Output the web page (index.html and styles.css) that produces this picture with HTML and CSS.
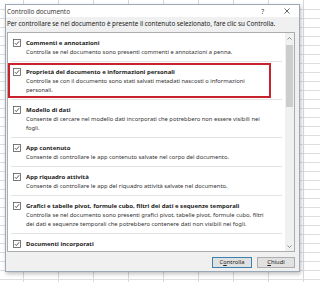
FILE: index.html
```html
<!DOCTYPE html>
<html lang="it">
<head>
<meta charset="utf-8">
<title>Controllo documento</title>
<link rel="stylesheet" href="styles.css">
</head>
<body>
<div class="dialog">
  <div class="titlebar">
    <span class="title">Controllo documento</span>
    <span class="help">?</span>
    <svg class="close" width="6" height="6" viewBox="0 0 6 6"><path d="M0.5 0.5 L5.5 5.5 M5.5 0.5 L0.5 5.5" stroke="#444" stroke-width="0.8" fill="none"/></svg>
  </div>
  <div class="content">
    <p class="intro">Per controllare se nel documento è presente il contenuto selezionato, fare clic su Controlla.</p>
    <div class="listbox">
      <div class="items">
        <div class="item">
          <div class="item-head"><svg class="check" width="8" height="8" viewBox="0 0 8 8"><rect x="0.5" y="0.5" width="7" height="7" fill="#fff" stroke="#5a5a5a" stroke-width="0.8"/><path d="M1.8 4.1 L3.3 5.6 L6.2 2.2" stroke="#333" stroke-width="0.8" fill="none"/></svg><span class="item-title">Commenti e annotazioni</span></div>
          <p class="item-desc">Controlla se nel documento sono presenti commenti e annotazioni a penna.</p>
        </div>
        <div class="item highlighted">
          <div class="item-head"><svg class="check" width="8" height="8" viewBox="0 0 8 8"><rect x="0.5" y="0.5" width="7" height="7" fill="#fff" stroke="#5a5a5a" stroke-width="0.8"/><path d="M1.8 4.1 L3.3 5.6 L6.2 2.2" stroke="#333" stroke-width="0.8" fill="none"/></svg><span class="item-title">Proprietà del documento e informazioni personali</span></div>
          <p class="item-desc">Controlla se con il documento sono stati salvati metadati nascosti o informazioni<br>personali.</p>
          <div class="redbox"></div>
        </div>
        <div class="item">
          <div class="item-head"><svg class="check" width="8" height="8" viewBox="0 0 8 8"><rect x="0.5" y="0.5" width="7" height="7" fill="#fff" stroke="#5a5a5a" stroke-width="0.8"/><path d="M1.8 4.1 L3.3 5.6 L6.2 2.2" stroke="#333" stroke-width="0.8" fill="none"/></svg><span class="item-title">Modello di dati</span></div>
          <p class="item-desc">Consente di cercare nel modello dati incorporati che potrebbero non essere visibili nei<br>fogli.</p>
        </div>
        <div class="item">
          <div class="item-head"><svg class="check" width="8" height="8" viewBox="0 0 8 8"><rect x="0.5" y="0.5" width="7" height="7" fill="#fff" stroke="#5a5a5a" stroke-width="0.8"/><path d="M1.8 4.1 L3.3 5.6 L6.2 2.2" stroke="#333" stroke-width="0.8" fill="none"/></svg><span class="item-title">App contenuto</span></div>
          <p class="item-desc">Consente di controllare le app contenuto salvate nel corpo del documento.</p>
        </div>
        <div class="item">
          <div class="item-head"><svg class="check" width="8" height="8" viewBox="0 0 8 8"><rect x="0.5" y="0.5" width="7" height="7" fill="#fff" stroke="#5a5a5a" stroke-width="0.8"/><path d="M1.8 4.1 L3.3 5.6 L6.2 2.2" stroke="#333" stroke-width="0.8" fill="none"/></svg><span class="item-title">App riquadro attività</span></div>
          <p class="item-desc">Consente di controllare le app del riquadro attività salvate nel documento.</p>
        </div>
        <div class="item">
          <div class="item-head"><svg class="check" width="8" height="8" viewBox="0 0 8 8"><rect x="0.5" y="0.5" width="7" height="7" fill="#fff" stroke="#5a5a5a" stroke-width="0.8"/><path d="M1.8 4.1 L3.3 5.6 L6.2 2.2" stroke="#333" stroke-width="0.8" fill="none"/></svg><span class="item-title">Grafici e tabelle pivot, formule cubo, filtri dei dati e sequenze temporali</span></div>
          <p class="item-desc">Controlla se nel documento sono presenti grafici pivot, tabelle pivot, formule cubo, filtri<br>dei dati e sequenze temporali che potrebbero contenere dati non visibili nei fogli.</p>
        </div>
        <div class="item">
          <div class="item-head"><svg class="check" width="8" height="8" viewBox="0 0 8 8"><rect x="0.5" y="0.5" width="7" height="7" fill="#fff" stroke="#5a5a5a" stroke-width="0.8"/><path d="M1.8 4.1 L3.3 5.6 L6.2 2.2" stroke="#333" stroke-width="0.8" fill="none"/></svg><span class="item-title">Documenti incorporati</span></div>
          <p class="item-desc">Controlla se sono presenti documenti incorporati che potrebbero contenere informazioni</p>
        </div>
      </div>
      <div class="scrollbar">
        <svg class="arrow" width="5" height="3" viewBox="0 0 5 3"><path d="M0.5 2.5 L2.5 0.5 L4.5 2.5" stroke="#777" stroke-width="0.8" fill="none"/></svg>
        <div class="thumb"></div>
        <div class="track"></div>
        <svg class="arrow" width="5" height="3" viewBox="0 0 5 3"><path d="M0.5 0.5 L2.5 2.5 L4.5 0.5" stroke="#777" stroke-width="0.8" fill="none"/></svg>
      </div>
    </div>
    <div class="buttons">
      <button class="btn btn-default">C<u>o</u>ntrolla</button>
      <button class="btn"><u>C</u>hiudi</button>
    </div>
  </div>
</div>
</body>
</html>
```

FILE: styles.css
```css
html, body {
  margin: 0;
  padding: 0;
}
body {
  width: 310px;
  height: 282px;
  overflow: hidden;
  padding: 4px 0 0 5px;
  box-sizing: border-box;
  font-family: "Noto Sans", "Open Sans", sans-serif;
  background-color: #fff;
  background-image:
    repeating-linear-gradient(to right, transparent 0, transparent 22px, #d9d9d9 22px, #d9d9d9 23px, transparent 23px, transparent 35px),
    repeating-linear-gradient(to bottom, transparent 0, transparent 8px, #dedede 8px, #dedede 9px);
  background-position: 1px 0, 0 1px;
}
.dialog {
  width: 295px;
  height: 268px;
  box-sizing: border-box;
  border: 1px solid #9aa8b8;
  background: #f0f0f0;
  box-shadow: 1px 2px 4px rgba(0,0,0,0.25);
  display: flex;
  flex-direction: column;
}
.titlebar {
  height: 12px;
  flex: none;
  background: #fff;
  display: flex;
  align-items: center;
  padding-left: 1px;
  padding-right: 9px;
  color: #3a3a3a;
}
.title {
  font-size: 6.3px;
  flex: 1;
}
.help {
  font-size: 6.5px;
  margin-right: 20px;
  color: #444;
}
.close {
  display: block;
}
.content {
  flex: 1;
  display: flex;
  flex-direction: column;
  padding: 0 4px 0 1px;
}
.intro {
  margin: 2px 0 0;
  font-size: 6.3px;
  line-height: 10px;
  color: #222;
  white-space: nowrap;
}
.listbox {
  margin-top: 3px;
  height: 220px;
  box-sizing: border-box;
  border: 1px solid #adadad;
  background: #fff;
  display: flex;
}
.items {
  flex: 1;
  overflow: hidden;
}
.item {
  position: relative;
  margin: 0 3px;
  padding: 5px 0 4px;
  border-bottom: 1px solid #e3e3e3;
}
.item-head {
  display: flex;
  align-items: center;
  height: 9px;
  padding-left: 2px;
  gap: 5px;
  margin-bottom: 1px;
}
.check {
  display: block;
  flex: none;
}
.item-title {
  font-size: 6px;
  font-weight: bold;
  color: #222;
  white-space: nowrap;
}
.item-desc {
  margin: 0;
  padding-left: 15px;
  font-size: 5.8px;
  line-height: 9px;
  color: #333;
  white-space: nowrap;
}
.redbox {
  position: absolute;
  left: -3px;
  top: 1px;
  width: 263px;
  height: 35px;
  box-sizing: border-box;
  border: 2px solid #c8232c;
}
.scrollbar {
  width: 9px;
  flex: none;
  background: #f0f0f0;
  display: flex;
  flex-direction: column;
  align-items: center;
}
.arrow {
  display: block;
  margin: 4px 0 3px;
}
.thumb {
  width: 7px;
  height: 62px;
  background: #cdcdcd;
  margin-top: 2px;
}
.track {
  flex: 1;
}
.buttons {
  display: flex;
  justify-content: flex-end;
  gap: 5px;
  margin-top: 5px;
}
.btn {
  width: 38px;
  height: 11px;
  padding: 0;
  box-sizing: border-box;
  border: 1px solid #adadad;
  background: #e1e1e1;
  font-family: "Noto Sans", "Open Sans", sans-serif;
  font-size: 5.8px;
  color: #222;
  line-height: 9px;
}
.btn-default {
  width: 40px;
  border-color: #3c7fb1;
}
.btn u {
  text-decoration-thickness: 0.5px;
}
```
